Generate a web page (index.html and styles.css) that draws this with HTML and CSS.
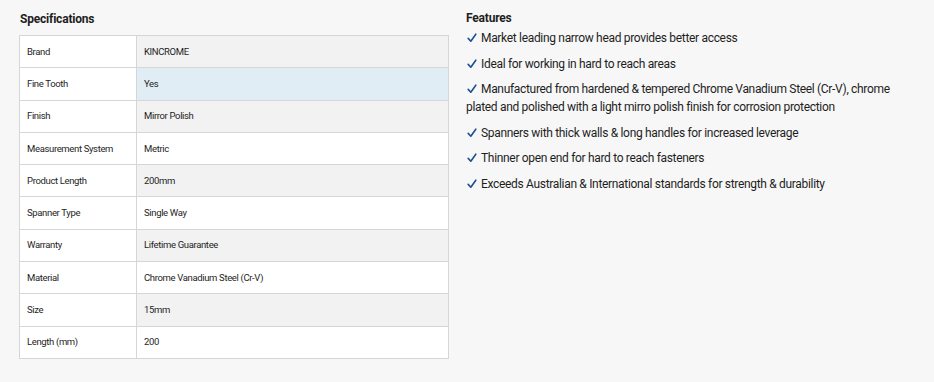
FILE: index.html
```html
<!DOCTYPE html>
<html>
<head>
<meta charset="utf-8">
<link rel="stylesheet" href="styles.css">
</head>
<body>
<div class="page">
  <section class="specs">
    <h3 class="title">Specifications</h3>
    <table class="spec-table">
      <tr><td class="k">Brand</td><td class="v">KINCROME</td></tr>
      <tr class="hover"><td class="k">Fine Tooth</td><td class="v">Yes</td></tr>
      <tr><td class="k">Finish</td><td class="v">Mirror Polish</td></tr>
      <tr><td class="k">Measurement System</td><td class="v">Metric</td></tr>
      <tr><td class="k">Product Length</td><td class="v">200mm</td></tr>
      <tr><td class="k">Spanner Type</td><td class="v">Single Way</td></tr>
      <tr><td class="k">Warranty</td><td class="v">Lifetime Guarantee</td></tr>
      <tr><td class="k">Material</td><td class="v">Chrome Vanadium Steel (Cr-V)</td></tr>
      <tr><td class="k">Size</td><td class="v">15mm</td></tr>
      <tr><td class="k">Length (mm)</td><td class="v">200</td></tr>
    </table>
  </section>
  <section class="features">
    <h3 class="ftitle">Features</h3>
    <ul class="flist">
      <li><svg class="tick" viewBox="0 0 10 10"><path d="M1.2 5.4 L3.8 8.2 L8.8 1.2"/></svg>Market leading narrow head provides better access</li>
      <li><svg class="tick" viewBox="0 0 10 10"><path d="M1.2 5.4 L3.8 8.2 L8.8 1.2"/></svg>Ideal for working in hard to reach areas</li>
      <li><svg class="tick" viewBox="0 0 10 10"><path d="M1.2 5.4 L3.8 8.2 L8.8 1.2"/></svg>Manufactured from hardened &amp; tempered Chrome Vanadium Steel (Cr-V), chrome plated and polished with a light mirro polish finish for corrosion protection</li>
      <li><svg class="tick" viewBox="0 0 10 10"><path d="M1.2 5.4 L3.8 8.2 L8.8 1.2"/></svg>Spanners with thick walls &amp; long handles for increased leverage</li>
      <li><svg class="tick" viewBox="0 0 10 10"><path d="M1.2 5.4 L3.8 8.2 L8.8 1.2"/></svg>Thinner open end for hard to reach fasteners</li>
      <li><svg class="tick" viewBox="0 0 10 10"><path d="M1.2 5.4 L3.8 8.2 L8.8 1.2"/></svg>Exceeds Australian &amp; International standards for strength &amp; durability</li>
    </ul>
  </section>
</div>
</body>
</html>
```
FILE: styles.css
```css
html, body {
  margin: 0;
  padding: 0;
  background: #f7f7f7;
  font-family: Roboto, "Liberation Sans", sans-serif;
  color: #1e1e1e;
}
.page {
  display: flex;
  gap: 17px;
  padding: 0 19px;
}
.specs {
  width: 430px;
  flex: none;
}
.title {
  margin: 12px 0 9px 1px;
  font-size: 12px;
  font-weight: bold;
  line-height: 14px;
  letter-spacing: -0.2px;
}
.spec-table {
  width: 430px;
  border-collapse: collapse;
  font-size: 9.5px;
  letter-spacing: -0.35px;
}
.spec-table tr {
  height: 32.3px;
}
.spec-table td {
  border: 1px solid #d6d6d6;
  padding: 0 0 1px 7px;
  vertical-align: middle;
}
.spec-table .k {
  width: 109px;
  background: #fff;
}
.spec-table .v {
  background: #fff;
}
.spec-table tr:nth-child(odd) .v {
  background: #f2f2f2;
}
.spec-table tr.hover .v {
  background: #e1edf4;
}
.features {
  flex: 1;
}
.ftitle {
  margin: 11px 0 4px 0;
  font-size: 12px;
  font-weight: bold;
  line-height: 14px;
  letter-spacing: -0.2px;
}
.flist {
  list-style: none;
  margin: 0;
  padding: 0;
  font-size: 12px;
  line-height: 18px;
  letter-spacing: -0.32px;
}
.flist li {
  margin-bottom: 7.5px;
}
.tick {
  display: inline-block;
  width: 10px;
  height: 10px;
  margin: 0 4px 0 1px;
  vertical-align: -1px;
  fill: none;
  stroke: #1d4f91;
  stroke-width: 1.6;
  stroke-linecap: round;
  stroke-linejoin: round;
}
```
